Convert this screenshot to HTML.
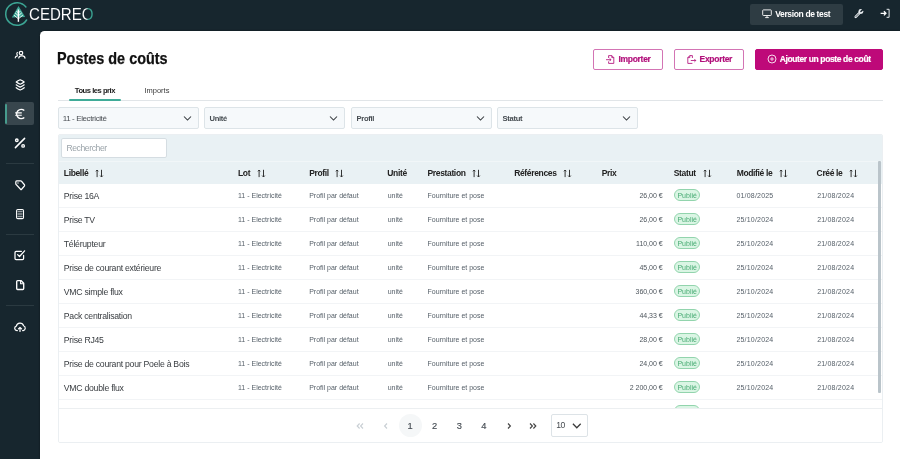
<!DOCTYPE html>
<html lang="fr">
<head>
<meta charset="utf-8">
<title>Postes de coûts</title>
<style>
*{box-sizing:border-box;margin:0;padding:0}
html,body{width:900px;height:459px;overflow:hidden}
body{background:#17262e;font-family:"Liberation Sans",sans-serif;position:relative;color:#222}
.abs{position:absolute}
header{position:absolute;left:0;top:0;width:900px;height:32px;will-change:transform}
.logo-text{position:absolute;left:28.5px;top:4.3px;font-size:16.4px;color:#fff;line-height:20px;font-weight:400;transform:scaleX(0.92);transform-origin:0 0;white-space:nowrap;-webkit-text-stroke:0.05px #17262e}
.logo-text i{font-style:normal;background:linear-gradient(90deg,#fff 0,#fff 40%,#3ca594 56%);-webkit-background-clip:text;background-clip:text;color:transparent;-webkit-text-stroke:0.05px #17262e}
.vbtn{position:absolute;left:750px;top:4px;width:93px;height:21px;background:#2e3c43;border-radius:2px;color:#fff;font-weight:700;font-size:8.5px;line-height:20.6px;padding-left:25.2px;white-space:nowrap;letter-spacing:-0.36px}
nav{position:absolute;left:0;top:32px;width:40px;height:427px;will-change:transform}
nav svg{position:absolute;left:10px;width:20px;height:20px;fill:none;stroke:#fff;stroke-width:1.2;stroke-linecap:round;stroke-linejoin:round}
nav .div{position:absolute;left:6px;width:28px;height:1px;background:#2b3a41}
nav .active{position:absolute;left:5px;top:70px;width:29.2px;height:23px;background:#38464d;border-radius:2px;overflow:hidden}
nav .active:before{content:"";position:absolute;left:0;top:1.5px;width:1.8px;height:20px;background:#479c8e;border-radius:1px}
main{position:absolute;left:40px;top:31px;width:860px;height:428px;background:#fff;border-top-left-radius:4.5px;will-change:transform;box-shadow:0 0 2px rgba(0,0,0,.5)}
.wrap{position:absolute;left:0;top:1px;width:860px;height:427px}
h1{position:absolute;left:17.4px;top:16.4px;font-size:16.3px;font-weight:700;color:#111;line-height:20px;white-space:nowrap;transform:scaleX(0.886);transform-origin:0 0;-webkit-text-stroke:0.25px #111}
.btn{position:absolute;top:17px;height:20.8px;border:1px solid #d374b4;-webkit-text-stroke:0.18px;border-radius:2px;color:#b2107b;font-weight:700;font-size:8.5px;line-height:19px;white-space:nowrap;background:#fff;letter-spacing:-0.3px}
.btn.primary{background:#be0979;color:#fff;border-color:#be0979}
.btn span{position:absolute;top:0}
.tabs{position:absolute;left:18px;top:67.8px;width:825px;height:1px;background:#e1e5e8}
.tab{position:absolute;top:52.9px;font-size:7.5px;line-height:12px;white-space:nowrap;color:#3a3a3a}
.tab.on{font-weight:700;color:#1a1a1a;letter-spacing:-0.47px;font-size:7.6px;margin-left:-0.6px}
.tabbar{position:absolute;left:29.4px;top:67px;width:51.3px;height:2px;background:#3fab98;border-radius:1px}
.sel{position:absolute;top:75px;width:141px;height:22px;background:#f6f9fb;border:1px solid #dde4e8;border-radius:2px;font-size:8px;line-height:21px;padding-left:3.8px;color:#4a4f54;white-space:nowrap;letter-spacing:-0.4px}
.sel.b{font-weight:700;color:#454b50;font-size:7.6px;letter-spacing:-0.3px;padding-left:4.5px}
.sel svg{position:absolute;left:123.6px;top:5.6px}
.card{position:absolute;left:18px;top:102.4px;width:825px;height:308.4px;border:1px solid #ebeff2;border-radius:2px;background:#fff;overflow:hidden}
.search{position:absolute;left:0;top:0;width:824px;height:26px;background:#e9f1f4}
.search .inp{position:absolute;left:2.2px;top:2.6px;width:106px;height:20.2px;background:#fff;border:1px solid #d5dde2;border-radius:2px;font-size:8.6px;line-height:19.6px;padding-left:4.2px;color:#9aa3a9;letter-spacing:-0.4px}
.thead{position:absolute;left:0;top:25.6px;width:824px;height:22.8px;background:#e9f1f4;box-shadow:inset 0 1px 0 #f1f6f8;font-weight:700;font-size:8.5px;line-height:24px;color:#222;letter-spacing:-0.35px}
.thead span,.row span{position:absolute;top:0;white-space:nowrap}
.sort{position:absolute;top:8.1px;fill:none;stroke:#2a2a2a;stroke-width:0.95}
.row{position:absolute;left:0;width:824px;height:24px;border-bottom:1px solid #f2f4f6;font-size:7px;line-height:23px;color:#57616a}
.row .l{font-size:8.7px;color:#383c40;left:4.8px;letter-spacing:-0.26px;line-height:24.2px}
.row .c1{left:179px}.row .c2{left:250.2px}.row .c3{left:328.7px}.row .c4{left:368.6px}
.row .p{right:220.5px;text-align:right;letter-spacing:-0.04px;color:#4d555c}
.row .d1{left:677.4px;letter-spacing:0.2px}.row .d2{left:758.2px;letter-spacing:0.2px}
.tag{position:absolute;left:615.2px;top:5.6px;width:26px;height:11.8px;border:1px solid #92d4ad;background:#daf5e4;border-radius:6px;color:#49ab74;font-size:7px;line-height:11.2px;text-align:center}
.pag{position:absolute;left:0;top:272.6px;width:824px;height:35px;background:#fff;border-top:1px solid #eceff1}
.pag span{position:absolute;top:0;line-height:34.5px;font-size:9.3px;color:#454c53;-webkit-text-stroke:0.15px #454c53;text-align:center;width:20px}
.pag .pi{position:absolute;top:13.2px;width:8px;height:8px}
.pag .pi svg{display:block}
.pag .cur{position:absolute;left:339.5px;top:4.8px;width:23px;height:23px;border-radius:50%;background:#f5f7f8}
.psel{position:absolute;left:491.6px;top:5.2px;width:37px;height:23px;border:1px solid #dde3e7;border-radius:2px;font-size:8.6px;line-height:21.4px;padding-left:4.7px;color:#454a4f;letter-spacing:-0.5px}
.psel svg{position:absolute;left:20.4px;top:6.6px}
.scroll{position:absolute;left:819px;top:26px;width:3px;height:232px;background:#bac4ca;border-radius:1px}
</style>
</head>
<body>
<header>
  <svg class="abs" style="left:4.4px;top:1px" width="26" height="26" viewBox="0 0 26 26">
    <path d="M21.9 6 A11.3 11.3 0 1 0 22.6 19" fill="none" stroke="#3ca594" stroke-width="1.5" stroke-linecap="round"/>
    <path d="M14.5 5 L7.8 16.6 L21.2 16 Z" fill="#3ca594"/>
    <path d="M14.4 8.5 V20.8" stroke="#fff" stroke-width="1.4" fill="none"/>
    <path d="M14.4 12 L12.4 10 M14.4 12 L16.4 10 M14.4 14.8 L11 11.8 M14.4 14.8 L17.8 11.8 M14.4 17.8 L10 14.2 M14.4 17.8 L18.8 14.2" stroke="#fff" stroke-width="0.9" fill="none"/>
  </svg>
  <div class="logo-text">CEDRE<i>O</i></div>
  <div class="vbtn">Version de test
    <svg class="abs" style="left:12px;top:5.4px" width="10" height="10" viewBox="0 0 10 10"><rect x="0.7" y="0.9" width="8.6" height="5.6" rx="0.7" fill="none" stroke="#fff" stroke-width="0.9"/><path d="M5 6.6 V8.4 M3.2 8.6 H6.8" stroke="#fff" stroke-width="0.9" fill="none"/></svg>
  </div>
  <svg class="abs" style="left:853px;top:8px" width="12" height="12" viewBox="0 0 12 12"><path d="M2.7 8.8 L6.3 5.2" stroke="#e9edf0" stroke-width="2.5" stroke-linecap="round" fill="none"/><path d="M2.8 8.7 L5.8 5.7" stroke="#17262e" stroke-width="0.75" stroke-linecap="round" fill="none"/><circle cx="7.9" cy="3.5" r="2.45" fill="#e9edf0"/><path d="M8 3.4 L10.8 0.6" stroke="#17262e" stroke-width="1.5" fill="none"/><circle cx="7.8" cy="3.6" r="0.7" fill="#17262e"/></svg>
  <svg class="abs" style="left:879px;top:8px" width="12" height="12" viewBox="0 0 12 12"><path d="M1.6 5.3 H6.6 M4.9 3.2 L7 5.3 L4.9 7.4" fill="none" stroke="#fff" stroke-width="1.25"/><path d="M7.6 1.3 H10.1 V9.3 H7.6" fill="none" stroke="#e4e9ec" stroke-width="1"/></svg>
</header>
<nav>
  <div class="active"></div>
  <svg style="top:13px" viewBox="0 0 20 20"><ellipse cx="11" cy="8.1" rx="1.75" ry="1.65" stroke-width="1.2"/><path d="M8.8 13 C9 11.3 10 10.8 11.2 10.8 H12.4 C13.8 10.8 14.8 11.4 15 13.1" stroke-width="1.15"/><path d="M7.4 7.4 C6.6 7.8 6.6 9.6 7.4 10 M5.2 12.9 C5.4 11.7 6.2 11.1 7.4 10.9" stroke-width="1.1"/></svg>
  <svg style="top:43.2px" viewBox="0 0 20 20" stroke-width="1.15"><path d="M10.2 4.8 Q12.6 5.8 14.2 7 Q12.6 8.2 10.2 9.2 Q7.8 8.2 6.2 7 Q7.8 5.8 10.2 4.8 Z M6.2 9.8 Q7.8 11.1 10.2 12.1 Q12.6 11.1 14.2 9.8 M6.2 12.7 Q7.8 14 10.2 15 Q12.6 14 14.2 12.7"/></svg>
  <svg style="top:71.7px" viewBox="0 0 20 20"><path d="M14.3 6.5 A4.6 4.6 0 1 0 14.3 13.5" stroke-width="1.45" stroke-linecap="butt"/><path d="M5.2 8.9 H11.8 M5.2 11.2 H11.8" stroke-width="1.15" stroke-linecap="butt"/></svg>
  <svg style="top:101.3px" viewBox="0 0 20 20"><path d="M5.4 14.6 L14.6 5.4" stroke-width="1.5"/><circle cx="6.8" cy="7.2" r="1.25" stroke-width="1.4"/><circle cx="13.1" cy="12.9" r="1.25" stroke-width="1.4"/></svg>
  <div class="div" style="top:131px"></div>
  <svg style="top:142.6px" viewBox="0 0 20 20"><g transform="translate(10.2 0) scale(0.88 1) translate(-10 0)"><path d="M5 6.9 Q5 5.9 6 5.9 H10.6 Q11.1 5.9 11.5 6.3 L14.8 9.7 Q15.3 10.3 14.8 10.9 L11.6 14.2 Q11 14.8 10.4 14.2 L5.4 9.6 Q5 9.2 5 8.7 Z" stroke-width="1.4"/><circle cx="7.5" cy="8.1" r="0.75" fill="#fff" stroke="none"/></g></svg>
  <svg style="top:172px" viewBox="0 0 20 20"><rect x="6.6" y="5.5" width="6.9" height="9.1" rx="1.2" stroke-width="1.1"/><path d="M8.2 7.6 H11.9 M8.2 10 H11.9 M8.2 12.4 H11.9" stroke-width="1.5" opacity="0.55"/></svg>
  <div class="div" style="top:202.2px"></div>
  <svg style="top:213px" viewBox="0 0 20 20"><path d="M13.6 10.4 V13.6 Q13.6 14.7 12.5 14.7 H6.1 Q5 14.7 5 13.6 V7.4 Q5 6.3 6.1 6.3 H11.4" stroke-width="1.25"/><path d="M7.6 9.6 L9.5 11.5 L14.6 5.8" stroke-width="1.25"/></svg>
  <svg style="top:242.7px" viewBox="0 0 20 20"><path d="M7.6 5.6 H11 L13.7 8.3 V13.6 Q13.7 14.5 12.8 14.5 H7.6 Q6.7 14.5 6.7 13.6 V6.5 Q6.7 5.6 7.6 5.6 Z" stroke-width="1.35"/><path d="M10.6 6 V8.8 H13.3" stroke-width="1.1"/></svg>
  <div class="div" style="top:273.2px"></div>
  <svg style="top:284.7px" viewBox="0 0 20 20"><path d="M7.4 13.6 H7 A2.3 2.3 0 0 1 6.3 9.1 A3.8 3.8 0 0 1 13.6 8.8 A2.5 2.5 0 0 1 13.2 13.6 H12.6" stroke-width="1.2"/><path d="M10 14.4 V10.6 M8.4 11.9 L10 10.3 L11.6 11.9" stroke-width="1.2"/></svg>
</nav>
<main>
<div class="wrap">
  <h1>Postes de coûts</h1>
  <div class="btn" style="left:553.2px;width:69.6px"><span style="left:24.3px">Importer</span>
    <svg class="abs" style="left:10.5px;top:4px" width="11" height="11" viewBox="0 0 11 11"><path d="M3.6 4 V1.6 H6.8 L8.8 3.6 V9.4 H3.6 V7.4 M6.8 1.6 V3.6 H8.8" fill="none" stroke="#b2107b" stroke-width="0.85"/><path d="M1 5.7 H6 M4.6 4.3 L6 5.7 L4.6 7.1" fill="none" stroke="#b2107b" stroke-width="0.85"/></svg>
  </div>
  <div class="btn" style="left:634.2px;width:69.6px"><span style="left:24.4px">Exporter</span>
    <svg class="abs" style="left:10.5px;top:4px" width="11" height="11" viewBox="0 0 11 11"><path d="M6.4 9.4 H1.8 V3.6 L3.8 1.6 H6.4 V4 M3.8 1.6 V3.6 H1.8" fill="none" stroke="#b2107b" stroke-width="0.85"/><path d="M4.8 6.5 H9.8 M8.4 5.1 L9.8 6.5 L8.4 7.9" fill="none" stroke="#b2107b" stroke-width="0.85"/></svg>
  </div>
  <div class="btn primary" style="left:715px;width:128px"><span style="left:23.7px;letter-spacing:-0.38px">Ajouter un poste de coût</span>
    <svg class="abs" style="left:11px;top:4.4px" width="10" height="10" viewBox="0 0 10 10"><circle cx="5" cy="5" r="4" fill="none" stroke="#fff" stroke-width="0.85"/><path d="M5 3 V7 M3 5 H7" stroke="#fff" stroke-width="0.75"/></svg>
  </div>

  <div class="tabs"></div>
  <div class="tab on" style="left:35.4px">Tous les prix</div>
  <div class="tab" style="left:104.4px">Imports</div>
  <div class="tabbar"></div>

  <div class="sel" style="left:18px">11 - Electricité<svg width="9" height="9" viewBox="0 0 9 9"><path d="M1 2.5 L4.5 6 L8 2.5" fill="none" stroke="#33383c" stroke-width="1.05"/></svg></div>
  <div class="sel b" style="left:164px">Unité<svg width="9" height="9" viewBox="0 0 9 9"><path d="M1 2.5 L4.5 6 L8 2.5" fill="none" stroke="#33383c" stroke-width="1.05"/></svg></div>
  <div class="sel b" style="left:311px">Profil<svg width="9" height="9" viewBox="0 0 9 9"><path d="M1 2.5 L4.5 6 L8 2.5" fill="none" stroke="#33383c" stroke-width="1.05"/></svg></div>
  <div class="sel b" style="left:457px">Statut<svg width="9" height="9" viewBox="0 0 9 9"><path d="M1 2.5 L4.5 6 L8 2.5" fill="none" stroke="#33383c" stroke-width="1.05"/></svg></div>

  <div class="card">
    <div class="search"><div class="inp">Rechercher</div></div>
    <div class="thead">
      <span style="left:4.8px">Libellé</span>
      <svg class="sort" style="left:35.8px" width="9" height="9" viewBox="0 0 9 9"><path d="M2.1 8.1 V1.1 M0.9 2.3 L2.1 1 L3.3 2.3 M6.5 0.8 V7.9 M5.2 6.6 L6.5 8 L7.8 6.6"/></svg>
      <span style="left:179px">Lot</span>
      <svg class="sort" style="left:197.5px" width="9" height="9" viewBox="0 0 9 9"><path d="M2.1 8.1 V1.1 M0.9 2.3 L2.1 1 L3.3 2.3 M6.5 0.8 V7.9 M5.2 6.6 L6.5 8 L7.8 6.6"/></svg>
      <span style="left:250.2px">Profil</span>
      <svg class="sort" style="left:276.4px" width="9" height="9" viewBox="0 0 9 9"><path d="M2.1 8.1 V1.1 M0.9 2.3 L2.1 1 L3.3 2.3 M6.5 0.8 V7.9 M5.2 6.6 L6.5 8 L7.8 6.6"/></svg>
      <span style="left:328.3px">Unité</span>
      <span style="left:368.5px">Prestation</span>
      <svg class="sort" style="left:413px" width="9" height="9" viewBox="0 0 9 9"><path d="M2.1 8.1 V1.1 M0.9 2.3 L2.1 1 L3.3 2.3 M6.5 0.8 V7.9 M5.2 6.6 L6.5 8 L7.8 6.6"/></svg>
      <span style="left:455.2px">Références</span>
      <svg class="sort" style="left:503.6px" width="9" height="9" viewBox="0 0 9 9"><path d="M2.1 8.1 V1.1 M0.9 2.3 L2.1 1 L3.3 2.3 M6.5 0.8 V7.9 M5.2 6.6 L6.5 8 L7.8 6.6"/></svg>
      <span style="left:542.7px">Prix</span>
      <span style="left:614.8px">Statut</span>
      <svg class="sort" style="left:644px" width="9" height="9" viewBox="0 0 9 9"><path d="M2.1 8.1 V1.1 M0.9 2.3 L2.1 1 L3.3 2.3 M6.5 0.8 V7.9 M5.2 6.6 L6.5 8 L7.8 6.6"/></svg>
      <span style="left:677.7px">Modifié le</span>
      <svg class="sort" style="left:720.2px" width="9" height="9" viewBox="0 0 9 9"><path d="M2.1 8.1 V1.1 M0.9 2.3 L2.1 1 L3.3 2.3 M6.5 0.8 V7.9 M5.2 6.6 L6.5 8 L7.8 6.6"/></svg>
      <span style="left:757.6px">Créé le</span>
      <svg class="sort" style="left:790.2px" width="9" height="9" viewBox="0 0 9 9"><path d="M2.1 8.1 V1.1 M0.9 2.3 L2.1 1 L3.3 2.3 M6.5 0.8 V7.9 M5.2 6.6 L6.5 8 L7.8 6.6"/></svg>
    </div>
    <div class="row" style="top:48.4px"><span class="l">Prise 16A</span><span class="c1">11 - Electricité</span><span class="c2">Profil par défaut</span><span class="c3">unité</span><span class="c4">Fourniture et pose</span><span class="p">26,00 €</span><div class="tag">Publié</div><span class="d1">01/08/2025</span><span class="d2">21/08/2024</span></div>
    <div class="row" style="top:72.4px"><span class="l">Prise TV</span><span class="c1">11 - Electricité</span><span class="c2">Profil par défaut</span><span class="c3">unité</span><span class="c4">Fourniture et pose</span><span class="p">26,00 €</span><div class="tag">Publié</div><span class="d1">25/10/2024</span><span class="d2">21/08/2024</span></div>
    <div class="row" style="top:96.4px"><span class="l">Télérupteur</span><span class="c1">11 - Electricité</span><span class="c2">Profil par défaut</span><span class="c3">unité</span><span class="c4">Fourniture et pose</span><span class="p">110,00 €</span><div class="tag">Publié</div><span class="d1">25/10/2024</span><span class="d2">21/08/2024</span></div>
    <div class="row" style="top:120.4px"><span class="l">Prise de courant extérieure</span><span class="c1">11 - Electricité</span><span class="c2">Profil par défaut</span><span class="c3">unité</span><span class="c4">Fourniture et pose</span><span class="p">45,00 €</span><div class="tag">Publié</div><span class="d1">25/10/2024</span><span class="d2">21/08/2024</span></div>
    <div class="row" style="top:144.4px"><span class="l">VMC simple flux</span><span class="c1">11 - Electricité</span><span class="c2">Profil par défaut</span><span class="c3">unité</span><span class="c4">Fourniture et pose</span><span class="p">360,00 €</span><div class="tag">Publié</div><span class="d1">25/10/2024</span><span class="d2">21/08/2024</span></div>
    <div class="row" style="top:168.4px"><span class="l">Pack centralisation</span><span class="c1">11 - Electricité</span><span class="c2">Profil par défaut</span><span class="c3">unité</span><span class="c4">Fourniture et pose</span><span class="p">44,33 €</span><div class="tag">Publié</div><span class="d1">25/10/2024</span><span class="d2">21/08/2024</span></div>
    <div class="row" style="top:192.4px"><span class="l">Prise RJ45</span><span class="c1">11 - Electricité</span><span class="c2">Profil par défaut</span><span class="c3">unité</span><span class="c4">Fourniture et pose</span><span class="p">28,00 €</span><div class="tag">Publié</div><span class="d1">25/10/2024</span><span class="d2">21/08/2024</span></div>
    <div class="row" style="top:216.4px"><span class="l">Prise de courant pour Poele à Bois</span><span class="c1">11 - Electricité</span><span class="c2">Profil par défaut</span><span class="c3">unité</span><span class="c4">Fourniture et pose</span><span class="p">24,00 €</span><div class="tag">Publié</div><span class="d1">25/10/2024</span><span class="d2">21/08/2024</span></div>
    <div class="row" style="top:240.4px"><span class="l">VMC double flux</span><span class="c1">11 - Electricité</span><span class="c2">Profil par défaut</span><span class="c3">unité</span><span class="c4">Fourniture et pose</span><span class="p">2 200,00 €</span><div class="tag">Publié</div><span class="d1">25/10/2024</span><span class="d2">21/08/2024</span></div>
    <div class="row" style="top:264.4px"><span class="l">Prise étanche extérieure</span><span class="c1">11 - Electricité</span><span class="c2">Profil par défaut</span><span class="c3">unité</span><span class="c4">Fourniture et pose</span><span class="p">55,00 €</span><div class="tag">Publié</div><span class="d1">25/10/2024</span><span class="d2">21/08/2024</span></div>
    <div class="scroll"></div>
    <div class="pag">
      <div class="pi" style="left:296.8px"><svg width="8" height="8" viewBox="0 0 8 8"><path d="M3.6 1.5 L1.2 4 L3.6 6.5 M7 1.5 L4.6 4 L7 6.5" fill="none" stroke="#c9cfd4" stroke-width="1.15"/></svg></div>
      <div class="pi" style="left:322.5px"><svg width="8" height="8" viewBox="0 0 8 8"><path d="M5 1.5 L2.6 4 L5 6.5" fill="none" stroke="#c9cfd4" stroke-width="1.15"/></svg></div>
      <div class="cur"></div>
      <span style="left:341px">1</span>
      <span style="left:365.5px">2</span>
      <span style="left:390.4px">3</span>
      <span style="left:414.9px">4</span>
      <div class="pi" style="left:445.8px"><svg width="8" height="8" viewBox="0 0 8 8"><path d="M3 1.5 L5.4 4 L3 6.5" fill="none" stroke="#444" stroke-width="1.15"/></svg></div>
      <div class="pi" style="left:470.3px"><svg width="8" height="8" viewBox="0 0 8 8"><path d="M1 1.5 L3.4 4 L1 6.5 M4.4 1.5 L6.8 4 L4.4 6.5" fill="none" stroke="#444" stroke-width="1.15"/></svg></div>
      <div class="psel">10<svg width="10" height="8" viewBox="0 0 10 8"><path d="M0.9 1.8 L4.8 5.8 L8.7 1.8" fill="none" stroke="#3a3a3a" stroke-width="1.25"/></svg></div>
    </div>
  </div>
</div>
</main>
</body>
</html>
